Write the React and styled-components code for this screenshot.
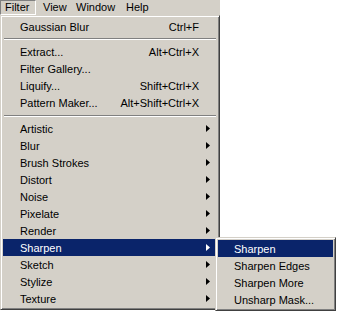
import React from "react";
import styled, { createGlobalStyle } from "styled-components";

const GlobalStyle = createGlobalStyle`
  html, body {
    margin: 0;
    padding: 0;
    background: #ffffff;
  }
  body {
    font-family: Tahoma, "Liberation Sans", Arial, sans-serif;
    font-size: 11px;
    color: #000000;
  }
`;

const Screen = styled.div`
  position: relative;
  width: 337px;
  height: 311px;
  overflow: hidden;
  background: #ffffff;
`;

const MenuBar = styled.div`
  display: flex;
  align-items: stretch;
  width: 220px;
  height: 15px;
  background: #d4d0c8;
`;

const BarItem = styled.div`
  flex: 0 0 ${(p) => p.$w}px;
  display: flex;
  align-items: center;
  padding-left: ${(p) => p.$pl || 6}px;
  line-height: 13px;
  box-sizing: border-box;
  border: 1px solid transparent;
  white-space: nowrap;
  ${(p) =>
    p.$open &&
    `
    border-color: #808080 #ffffff #ffffff #808080;
  `}
`;

const Menu = styled.div`
  width: 220px;
  box-sizing: border-box;
  background: #d4d0c8;
  border: 1px solid;
  border-color: #d4d0c8 #404040 #404040 #d4d0c8;
  box-shadow: inset 1px 1px 0 #ffffff, inset -1px -1px 0 #808080;
  padding: 2px;
`;

const SubMenu = styled(Menu)`
  position: absolute;
  left: 215px;
  top: 237px;
  width: 121px;
`;

const Row = styled.div`
  display: flex;
  align-items: center;
  height: 17px;
  padding: 0 0 0 ${(p) => p.$indent || 17}px;
  background: ${(p) => (p.$active ? "#0a246a" : "transparent")};
  color: ${(p) => (p.$active ? "#ffffff" : "#000000")};
  white-space: nowrap;
`;

const Label = styled.span`
  flex: 1;
`;

const Shortcut = styled.span`
  width: 100px;
  text-align: right;
  padding-right: 18px;
`;

const ArrowCell = styled.span`
  display: flex;
  align-items: center;
  justify-content: center;
  width: 14px;
  margin-right: 2px;
`;

const Separator = styled.div`
  height: ${(p) => p.$h || 8}px;
  display: flex;
  align-items: center;
  padding: 0 1px;
  &::before {
    content: "";
    flex: 1;
    height: 0;
    border-top: 1px solid #808080;
    border-bottom: 1px solid #ffffff;
  }
`;

const Arrow = ({ color }) => (
  <svg width="4" height="7" viewBox="0 0 4 7">
    <path d="M0 0 L4 3.5 L0 7 Z" fill={color} />
  </svg>
);

const top = [{ label: "Gaussian Blur", key: "Ctrl+F" }];
const middle = [
  { label: "Extract...", key: "Alt+Ctrl+X" },
  { label: "Filter Gallery...", key: "" },
  { label: "Liquify...", key: "Shift+Ctrl+X" },
  { label: "Pattern Maker...", key: "Alt+Shift+Ctrl+X" },
];
const groups = [
  "Artistic",
  "Blur",
  "Brush Strokes",
  "Distort",
  "Noise",
  "Pixelate",
  "Render",
  "Sharpen",
  "Sketch",
  "Stylize",
  "Texture",
];
const sharpen = ["Sharpen", "Sharpen Edges", "Sharpen More", "Unsharp Mask..."];

export default function App() {
  return (
    <Screen>
      <GlobalStyle />
      <MenuBar>
        <BarItem $open $w={36} $pl={4}>
          Filter
        </BarItem>
        <BarItem $w={34} $pl={6}>View</BarItem>
        <BarItem $w={50} $pl={5}>Window</BarItem>
        <BarItem $w={40} $pl={5}>Help</BarItem>
      </MenuBar>
      <Menu>
        {top.map((it) => (
          <Row key={it.label}>
            <Label>{it.label}</Label>
            <Shortcut>{it.key}</Shortcut>
          </Row>
        ))}
        <Separator />
        {middle.map((it) => (
          <Row key={it.label}>
            <Label>{it.label}</Label>
            <Shortcut>{it.key}</Shortcut>
          </Row>
        ))}
        <Separator $h={9} />
        {groups.map((g) => (
          <Row key={g} $active={g === "Sharpen"}>
            <Label>{g}</Label>
            <ArrowCell>
              <Arrow color={g === "Sharpen" ? "#ffffff" : "#000000"} />
            </ArrowCell>
          </Row>
        ))}
      </Menu>
      <SubMenu>
        {sharpen.map((s, i) => (
          <Row key={s} $active={i === 0} $indent={16}>
            <Label>{s}</Label>
          </Row>
        ))}
      </SubMenu>
    </Screen>
  );
}
